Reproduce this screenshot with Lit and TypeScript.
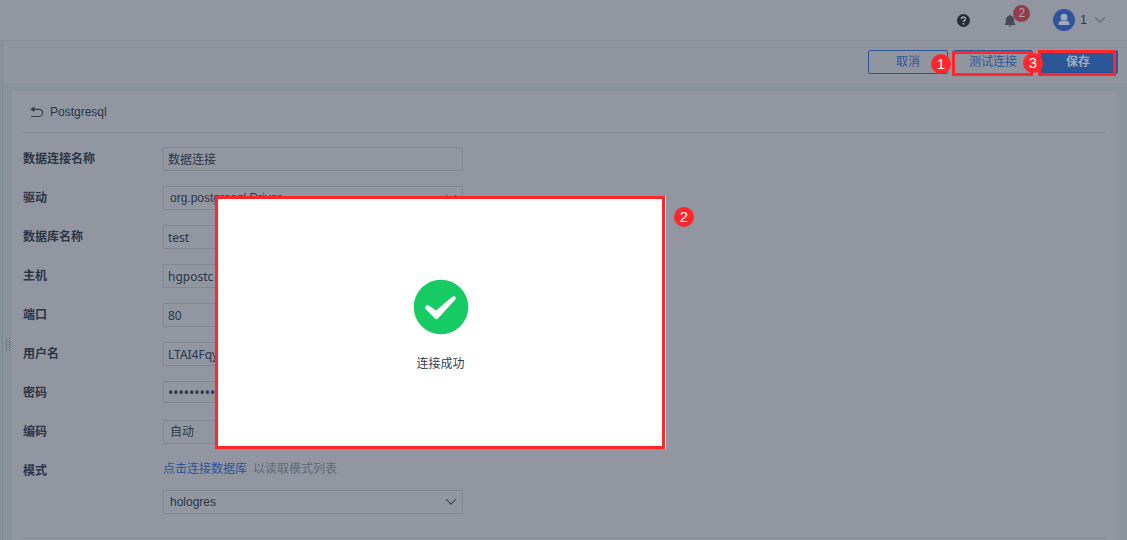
import { LitElement, html, css, nothing } from "lit";
import { customElement, property } from "lit/decorators.js";

const chevron = html`<svg class="chevron" viewBox="0 0 12 8" width="12" height="8" aria-hidden="true">
  <path d="M1 1.2 6 6.2 11 1.2" fill="none" stroke="currentColor" stroke-width="1.2" />
</svg>`;

interface Field {
  id: string;
  label: string;
  kind: "text" | "password" | "select";
  value: string;
}

const FIELDS: Field[] = [
  { id: "name", label: "数据连接名称", kind: "text", value: "数据连接" },
  { id: "driver", label: "驱动", kind: "select", value: "org.postgresql.Driver" },
  { id: "database", label: "数据库名称", kind: "text", value: "test" },
  { id: "host", label: "主机", kind: "text", value: "hgpostc" },
  { id: "port", label: "端口", kind: "text", value: "80" },
  { id: "user", label: "用户名", kind: "text", value: "LTAI4Fqy" },
  { id: "password", label: "密码", kind: "password", value: "••••••••••" },
  { id: "encoding", label: "编码", kind: "select", value: "自动" },
];

@customElement("step-marker")
class StepMarker extends LitElement {
  @property() step = "";
  static styles = css`
    :host {
      display: flex;
      align-items: center;
      justify-content: center;
      width: 20px;
      height: 20px;
      border-radius: 50%;
      background: #ff262c;
      color: #fff;
      font: 15px/20px "Liberation Sans", sans-serif;
    }
  `;
  render() {
    return html`<span>${this.step}</span>`;
  }
}

@customElement("app-root")
class AppRoot extends LitElement {
  static styles = css`
    :host {
      display: block;
      position: relative;
      box-sizing: border-box;
      min-height: 100vh;
      overflow: hidden;
      background: #8a929c;
      color: #2c3548;
      font: 12px/16px "Liberation Sans", "Noto Sans CJK SC", sans-serif;
    }
    * { box-sizing: border-box; }
    .top {
      display: flex;
      align-items: center;
      justify-content: flex-end;
      height: 41px;
      padding-right: 21px;
      background: #9196a0;
      border-bottom: 1px solid #8a909b;
    }
    .icon-button {
      display: flex;
      position: relative;
      padding: 0;
      border: 0;
      background: none;
      color: inherit;
      font: inherit;
    }
    .help { margin-right: 34px; }
    .bell { margin-right: 37px; }
    .count {
      position: absolute;
      left: 9px;
      top: -9px;
      width: 17px;
      height: 17px;
      border-radius: 50%;
      background: #953b49;
      color: #a9a4ad;
      font-size: 12px;
      line-height: 17px;
      text-align: center;
    }
    .account {
      align-items: center;
      gap: 5px;
    }
    .account .chevron { margin-left: 2px; color: #656b78; }
    .body {
      margin-left: 2px;
      border-left: 1px solid #7f8792;
    }
    .toolbar {
      display: flex;
      justify-content: flex-end;
      gap: 5px;
      padding: 9px 9px 9px 0;
      background: #9095a0;
    }
    .action { position: relative; }
    .btn {
      display: block;
      width: 80px;
      height: 24px;
      padding: 0;
      border: 1px solid #2c5797;
      border-radius: 2px;
      background: none;
      color: #30569b;
      font: inherit;
      line-height: 22px;
    }
    .primary { background: #2b5698; color: #a3abba; font-weight: 700; }
    .frame {
      position: absolute;
      inset: 1px 0 -2px -1px;
      border: 3px solid #ff262c;
      pointer-events: none;
    }
    .frame.save { inset: 0 2px -2px 0; }
    .action step-marker { position: absolute; left: -22px; top: 4px; }
    .action .three { left: -15px; top: 3px; }
    .card {
      margin: 8px 10px 0 9px;
      padding: 0 11px;
      min-height: calc(100vh - 91px);
      background: #9196a0;
    }
    .heading {
      display: flex;
      align-items: center;
      gap: 7px;
      height: 42px;
      padding-left: 7px;
      border-bottom: 1px solid #838893;
    }
    h1 { margin: 0; font-size: 12px; font-weight: 400; }
    form {
      display: grid;
      gap: 15px;
      padding-top: 14px;
      padding-bottom: 24px;
      border-bottom: 1px solid #838893;
    }
    .row {
      display: grid;
      grid-template-columns: 140px 300px;
      align-items: start;
    }
    .row > label { line-height: 24px; font-weight: 700; }
    .control {
      display: block;
      width: 100%;
      height: 24px;
      margin: 0;
      padding: 0 4px;
      border: 1px solid #838893;
      border-radius: 0;
      outline: 0;
      appearance: none;
      background: none;
      color: inherit;
      font: 12px/22px "Noto Sans", "Noto Sans CJK SC", sans-serif;
    }
    input[type="password"] { height: 22px; margin-bottom: 2px; font-size: 14px; line-height: 20px; }
    select.control { padding: 0 6px; font-family: "Liberation Sans", "Noto Sans CJK SC", sans-serif; }
    .picker { display: grid; align-items: center; }
    .picker > * { grid-area: 1 / 1; }
    .picker .chevron { justify-self: end; margin-right: 6px; color: #3f4757; pointer-events: none; }
    .mode { display: grid; gap: 12px; padding-top: 1px; }
    .hint { margin: 0; color: #636a78; line-height: 18px; }
    a { margin-right: 6px; color: #28549f; text-decoration: none; }
    .grip { position: absolute; left: 6px; top: 338px; fill: #5d6572; }
    .result {
      position: absolute;
      left: 215px;
      top: 196px;
      display: flex;
      flex-direction: column;
      align-items: center;
      width: 450px;
      height: 253px;
      padding: 80px 0 0 1px;
      margin: 0;
      border: 3px solid #ff262c;
      background: #fff;
      box-shadow: 1px 0 #fff;
      color: #333c52;
    }
    .result p { margin: 21px 0 0; }
    .two { position: absolute; left: 674px; top: 207px; }
  `;

  private picker(id: string, value: string) {
    return html`<div class="picker">
      <select class="control" id=${id}><option>${value}</option></select>${chevron}
    </div>`;
  }

  private field(f: Field) {
    return html`<div class="row">
      <label for=${f.id}>${f.label}</label>
      ${f.kind === "select"
        ? this.picker(f.id, f.value)
        : html`<input class="control" id=${f.id} type=${f.kind} .value=${f.value} autocomplete="off" />`}
    </div>`;
  }

  private action(label: string, kind = "", step = "") {
    return html`<div class="action">
      <button class="btn ${kind === "save" ? "primary" : ""}" type="button">${label}</button>
      ${kind ? html`<span class="frame ${kind}"></span>` : nothing}
      ${step ? html`<step-marker class=${step === "3" ? "three" : "one"} step=${step}></step-marker>` : nothing}
    </div>`;
  }

  render() {
    return html`
      <header class="top">
        <button class="icon-button help" aria-label="帮助">
          <svg width="13" height="13" viewBox="0 0 13 13">
            <circle cx="6.5" cy="6.5" r="6.5" fill="#272c36" />
            <path d="M4.5 5.1c0-2.7 4-2.7 4-.2 0 1.5-2 1.4-2 3.1" fill="none" stroke="#a5a9b1" stroke-width="1.5" />
            <rect x="5.7" y="9" width="1.6" height="1.6" fill="#a5a9b1" />
          </svg>
        </button>
        <button class="icon-button bell" aria-label="通知">
          <svg width="12" height="13" viewBox="0 0 12 13" fill="#434b58">
            <path d="M6 .8c.6 0 .9.4.9.9C9 2.200 10.100 3.700 10.100 5.600V8.500L11.300 10.300v.6H.7v-.6L1.900 8.500V5.600c0-1.900 1.100-3.400 3.200-3.900C5.100 1.200 5.400.8 6 .8z" />
            <path d="M4.500 11.500h3c0 1.600-3 1.600-3 0z" />
          </svg>
          <span class="count">2</span>
        </button>
        <button class="icon-button account" aria-label="账户 1">
          <svg width="22" height="22" viewBox="0 0 22 22">
            <circle cx="11" cy="11" r="11" fill="#2f539f" />
            <circle cx="11" cy="8.200" r="3.500" fill="#a2a8b5" />
            <path d="M5.300 16c0-3.200 2-4.200 3.500-4.600 1.300.9 3.100.9 4.400 0 1.500.4 3.500 1.400 3.500 4.600z" fill="#a2a8b5" />
          </svg>
          <span>1</span>
          ${chevron}
        </button>
      </header>
      <main class="body">
        <div class="toolbar">
          ${this.action("取消")} ${this.action("测试连接", "test", "1")} ${this.action("保存", "save", "3")}
        </div>
        <section class="card">
          <div class="heading">
            <button class="icon-button" aria-label="返回">
              <svg width="13" height="12" viewBox="0 0 13 12">
                <path d="M3 3.300h6a3.500 3.500 0 0 1 0 7.200H1" fill="none" stroke="#353d4e" stroke-width="1.200" />
                <path d="M0 3.300 4.500.6V6z" fill="#353d4e" />
              </svg>
            </button>
            <h1>Postgresql</h1>
          </div>
          <form>
            ${FIELDS.map((f) => this.field(f))}
            <div class="row">
              <label for="schema">模式</label>
              <div class="mode">
                <p class="hint"><a href="#">点击连接数据库</a>以读取模式列表</p>
                ${this.picker("schema", "hologres")}
              </div>
            </div>
          </form>
        </section>
      </main>
      <svg class="grip" width="5" height="13" viewBox="0 0 5 13" aria-hidden="true">
        ${[0, 2, 4, 6, 8, 10, 12].map(
          (y) => html`<svg y=${y} width="5" height="1"><rect width="1" height="1" /><rect x="3" width="1" height="1" /></svg>`
        )}
      </svg>
      <div class="result" role="dialog" aria-label="连接成功">
        <svg width="56" height="56" viewBox="0 0 56 56" aria-hidden="true">
          <circle cx="28" cy="28" r="27.300" fill="#16cb63" />
          <path d="M12.200 27.800c1.100-2 2.700-2.100 4.300-.8l6.500 4.400 16.300-13.700c2.400-1.500 4.500.5 3 2.700L25.200 39.300c-1 1.200-2.600 1.100-3.500 0l-9.100-9.200c-.7-.8-.8-1.500-.4-2.300z" fill="#fff" />
        </svg>
        <p>连接成功</p>
      </div>
      <step-marker class="two" step="2"></step-marker>
    `;
  }
}
